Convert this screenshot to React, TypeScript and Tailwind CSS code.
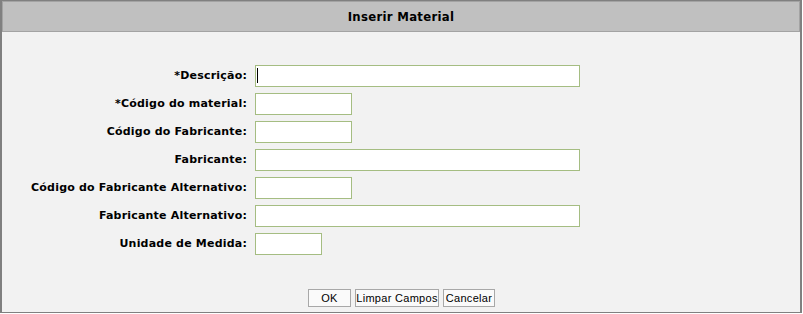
import React from "react";

const rows: { label: string; w: number; caret?: boolean }[] = [
  { label: "*Descrição:", w: 325, caret: true },
  { label: "*Código do material:", w: 97 },
  { label: "Código do Fabricante:", w: 97 },
  { label: "Fabricante:", w: 325 },
  { label: "Código do Fabricante Alternativo:", w: 97 },
  { label: "Fabricante Alternativo:", w: 325 },
  { label: "Unidade de Medida:", w: 67 },
];

const btn =
  "h-[18px] bg-[#fafafa] border border-[#a8a8a8] text-[11px] tracking-[0.3px] whitespace-nowrap text-black [font-family:'Liberation_Sans',Arial,sans-serif] flex items-center justify-center";

export default function App() {
  return (
    <div className="w-[803px] h-[314px] bg-white">
      <div className="w-[802px] h-[313px] border-l-2 border-t border-r-2 border-b border-[#808080] bg-[#f2f2f2] flex flex-col">
        <div className="h-[31px] bg-[#c0c0c0] border border-[#a3a3a3] flex items-center justify-center text-[13px] tracking-[0.3px] text-black [font-family:'DejaVu_Sans_Condensed','DejaVu_Sans',sans-serif] font-bold">
          Inserir Material
        </div>
        <div className="mt-[33px] grid grid-cols-[245px_1fr] gap-x-[8px] gap-y-[6px]">
          {rows.map((r) => (
            <React.Fragment key={r.label}>
              <div className="h-[22px] flex items-center justify-end text-[11px] tracking-[0.2px] font-bold text-black [font-family:'DejaVu_Sans',Verdana,sans-serif]">
                {r.label}
              </div>
              <div className="h-[22px]">
                <div
                  className="relative h-[22px] bg-white border border-[#a5bd82]"
                  style={{ width: r.w }}
                >
                  {r.caret && (
                    <div className="absolute left-[1px] top-[2px] w-[1px] h-[15px] bg-black" />
                  )}
                </div>
              </div>
            </React.Fragment>
          ))}
        </div>
        <div className="mt-[34px] flex justify-center gap-[4px] pl-[1px]">
          <button className={`w-[43px] ${btn}`}>OK</button>
          <button className={`w-[84px] ${btn}`}>Limpar Campos</button>
          <button className={`w-[52px] ${btn}`}>Cancelar</button>
        </div>
      </div>
    </div>
  );
}
